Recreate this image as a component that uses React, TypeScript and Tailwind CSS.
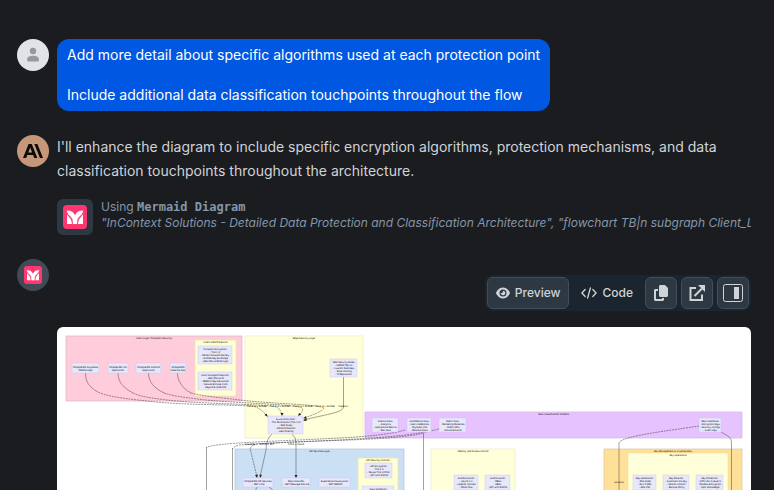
import type { ReactNode } from "react";
import { FaCopy, FaEye } from "react-icons/fa6";

type Box = { x: number; y: number; w: number; h: number };
type Group = Box & { title: string; fill: string; stroke: string };
type Node = Box & { lines: string[] };

const groups: Group[] = [
  { x: 9, y: 9, w: 176, h: 65, title: "Client Layer (Transport Security)", fill: "#ffccdc", stroke: "#d9b3be" },
  { x: 138, y: 13, w: 41, h: 56, title: "Client-Side Protection", fill: "#ffffd4", stroke: "#e6e6ab" },
  { x: 188, y: 9, w: 118, h: 102, title: "Edge Security Layer", fill: "#ffffd9", stroke: "#ebebc4" },
  { x: 308, y: 85, w: 377, h: 26, title: "Data Classification Schema", fill: "#e6c3ff", stroke: "#d2b6e2" },
  { x: 178, y: 122, w: 169, h: 170, title: "API Services Layer", fill: "#cce0f5", stroke: "#b1c2d4" },
  { x: 301, y: 131, w: 40, h: 150, title: "API Security Controls", fill: "#ffffd4", stroke: "#e6e6ab" },
  { x: 374, y: 122, w: 84, h: 170, title: "Identity and Access Control", fill: "#ffffd9", stroke: "#ebebc4" },
  { x: 547, y: 122, w: 138, h: 170, title: "Key Management & Cryptography", fill: "#ffe099", stroke: "#d9c69b" },
  { x: 571, y: 126, w: 100, h: 160, title: "Key Operations", fill: "#ffffd9", stroke: "#ebe2a4" },
];

const nodes: Node[] = [
  { x: 15, y: 36, w: 27, h: 10, lines: ["ShopperMX Anywhere", "(Mobile App)"] },
  { x: 51, y: 36, w: 20, h: 10, lines: ["ShopperMX iOS", "Application"] },
  { x: 79, y: 36, w: 25, h: 10, lines: ["ShopperMX Android", "Application"] },
  { x: 113, y: 36, w: 16, h: 10, lines: ["ShopperMX", "Desktop App"] },
  { x: 141, y: 19, w: 34, h: 18, lines: ["Transport Encryption", "- TLS 1.3", "- Perfect Forward Secrecy", "- ECDHE Key Exchange", "- AES-256-GCM Encrypt"] },
  { x: 141, y: 45, w: 34, h: 18, lines: ["Local Storage Protection", "- AES-256-GCM", "- PBKDF2 Key Derivation", "- Secure Enclave (iOS)", "- Keystore (Android)"] },
  { x: 273, y: 32, w: 27, h: 18, lines: ["WAF Security Rules", "- OWASP Top 10", "- Custom Rule Sets", "- Rate Limiting", "- IP Reputation"] },
  { x: 211, y: 89, w: 35, h: 18, lines: ["Azure Front Door", "- TLS Termination (TLS 1.3)", "- WAF Rules", "- DDoS Protection", "- Geo-Filtering"] },
  { x: 315, y: 91, w: 26, h: 14, lines: ["Internal Data", "- Analytics", "- Operational Metrics", "- Test Data"] },
  { x: 350, y: 91, w: 24, h: 14, lines: ["Confidential Data", "- User Credentials", "- Payment Info", "- Personal Data"] },
  { x: 382, y: 91, w: 27, h: 14, lines: ["Public Data", "- Marketing Materials", "- Public APIs", "- Documentation"] },
  { x: 642, y: 91, w: 22, h: 14, lines: ["Restricted Data", "- Encryption Keys", "- Security Configs", "- Audit Logs"] },
  { x: 186, y: 151, w: 30, h: 9, lines: ["ShopperMX API Services", "- .NET Core"] },
  { x: 225, y: 151, w: 28, h: 9, lines: ["Real-time APIs", "- .NET Message Service"] },
  { x: 262, y: 151, w: 31, h: 9, lines: ["Experience Visualization", "- .NET WebAPI"] },
  { x: 308, y: 136, w: 27, h: 15, lines: ["API Encryption", "- TLS 1.3", "- Mutual TLS (mTLS)", "- JWT with RS256"] },
  { x: 305, y: 159, w: 32, h: 6, lines: ["Data Validation"] },
  { x: 397, y: 148, w: 24, h: 15, lines: ["Authentication", "- OAuth 2.0", "- OpenID Connect", "- PKCE Flow"] },
  { x: 428, y: 148, w: 25, h: 15, lines: ["Authorization", "- RBAC", "- ABAC", "- JWT with RS256"] },
  { x: 576, y: 148, w: 23, h: 15, lines: ["Key Generation", "- RSA-4096", "- ECC P-384", "- AES-256"] },
  { x: 606, y: 148, w: 26, h: 15, lines: ["Key Rotation", "- Automatic 90-day", "- Version Control", "- Backup Policy"] },
  { x: 639, y: 148, w: 27, h: 15, lines: ["Key Protection", "- FIPS 140-2 Level 3", "- Shadow Encryption", "- Split Knowledge"] },
];

const dashedEdges = [
  "M39 64 C48 69 62 71 90 74 C130 79 190 77 199 80 Q205 83 210 89",
  "M76 66 C84 70 95 71 110 73 C140 77 210 77 220 80 Q224 83 225 88",
  "M107 66 C116 69 125 70 140 72 C170 76 240 77 245 81 Q247 84 242 88",
  "M134 66 C145 69 158 70 175 72 C210 77 262 77 267 81 Q265 85 247 91",
  "M348 103 C320 112 240 112 183 116 Q150 118 149.500 121",
  "M382 102 C340 113 260 113 183 118 Q177 119 175.500 122",
  "M366 106 C340 114 250 113 200 117 Q191 119 194 125 L200 150",
  "M642 99 C610 104 564 109 562 116",
];

const solidEdges = [
  "M28.500 46 C28.500 55 32 59 39 64",
  "M61 46 C61 56 67 61 76 66",
  "M91.500 46 C91.500 55 97 61 107 66",
  "M120.500 46 C120.500 54 125 61 134 66",
  "M286.500 50 V80 C286 86 265 88 247 93",
  "M215 107 Q209 112 209 123 L203 150",
  "M235 107 Q239 110 239 116 V150",
  "M149.500 120 V290",
  "M175.500 121 V290",
  "M366.500 106 V290",
  "M562 116 V290",
  "M664 105 C671 109 674.500 110 674.500 116 V290",
  "M200 160 Q197 164 198 180",
  "M212 160 Q219 163 220 180",
];

const arrowheads = [
  "M211 90 L207.500 88 L209.500 86.500 Z",
  "M225 89 L223.500 86 L226.500 86 Z",
  "M241 89 L242 86 L244.500 87.500 Z",
  "M246 91.500 L249 89 L249.500 91.500 Z",
  "M246 93.500 L249.500 91 L249.500 94 Z",
  "M200 151 L198 148 L201 147.500 Z",
  "M203 151 L202.500 147.500 L205 148 Z",
  "M239 151 L237.500 148 L240.500 148 Z",
];

const edgeLabels = [
  { x: 200, y: 80, text: "TLS 1.3 + ECDHE" },
  { x: 223, y: 80, text: "TLS 1.3 + ECDHE" },
  { x: 246, y: 80, text: "TLS 1.3 + ECDHE" },
  { x: 268, y: 80, text: "TLS 1.3 + ECDHE" },
  { x: 286, y: 80, text: "Inspects" },
  { x: 193, y: 118, text: "Classifies" },
  { x: 210, y: 118, text: "mTLS + JWT" },
  { x: 239, y: 118, text: "mTLS + OAuth" },
  { x: 562, y: 156, text: "Governs" },
];

function Diagram() {
  return (
    <svg
      viewBox="0 0 694 300"
      className="block w-full font-['DejaVu_Sans_Condensed','DejaVu_Sans',sans-serif]"
      role="img"
      aria-label="Data protection and classification architecture"
      fontSize="2.500"
      textAnchor="middle"
      fill="#000"
    >
      {groups.map((g) => (
        <g key={g.title}>
          <rect x={g.x} y={g.y} width={g.w} height={g.h} fill={g.fill} stroke={g.stroke} strokeWidth="0.700" />
          <text x={g.x + g.w / 2} y={g.y + 3}>
            {g.title}
          </text>
        </g>
      ))}
      {dashedEdges.map((d) => (
        <path key={d} d={d} fill="none" stroke="#333" strokeWidth="0.500" strokeDasharray="2 0.800" />
      ))}
      {solidEdges.map((d) => (
        <path key={d} d={d} fill="none" stroke="#444" strokeWidth="0.500" />
      ))}
      {arrowheads.map((d) => (
        <path key={d} d={d} fill="#222" />
      ))}
      {nodes.map((n) => (
        <g key={`${n.x}-${n.y}`}>
          <rect x={n.x} y={n.y} width={n.w} height={n.h} fill="#e8e8fc" stroke="#cdbcf0" strokeWidth="0.400" />
          {n.lines.map((line, i) => (
            <text key={line} x={n.x + n.w / 2} y={n.y + n.h / 2 + (i - (n.lines.length - 1) / 2) * 3 + 1}>
              {line}
            </text>
          ))}
        </g>
      ))}
      {edgeLabels.map((l) => (
        <text key={`${l.x}-${l.y}`} x={l.x} y={l.y}>
          {l.text}
        </text>
      ))}
    </svg>
  );
}

function MermaidLogo({ className }: { className: string }) {
  return (
    <svg viewBox="0 0 24 24" className={className} aria-hidden="true">
      <rect width="24" height="24" rx="4" fill="#ff3670" />
      <path d="M4 9 C5 12 9 13 9 19 H4 Z M20 9 C19 12 15 13 15 19 H20 Z" fill="#fff" />
      <path
        d="M3.500 5 C8 5 10.500 6.500 12 9.500 C13.500 6.500 16 5 20.500 5 C20.500 8.500 18.500 10.500 16.500 12 C15 13.200 14.600 15 14.600 19.500 H9.400 C9.400 15 9 13.200 7.500 12 C5.500 10.500 3.500 8.500 3.500 5 Z"
        fill="#fff"
        stroke="#ff3670"
        strokeWidth="0.900"
      />
    </svg>
  );
}

function Avatar({ className, children }: { className: string; children: ReactNode }) {
  return <div className={`flex size-8 shrink-0 items-center justify-center rounded-full ${className}`}>{children}</div>;
}

function IconButton({ label, children }: { label: string; children: ReactNode }) {
  return (
    <button
      type="button"
      aria-label={label}
      className="flex size-8 items-center justify-center rounded-md border border-[#414e5b] bg-[#2d3843]"
    >
      {children}
    </button>
  );
}

export default function App() {
  return (
    <main className="flex h-screen flex-col gap-6 overflow-hidden bg-[#1b1c1f] pt-[39px] pr-[23px] pl-[17px] font-[Inter,sans-serif] text-[#d0d3d8]">
      <section className="flex shrink-0 gap-2">
        <Avatar className="bg-[#e2e3e8]">
          <svg viewBox="0 0 16 16" className="size-4" fill="#96989e" aria-hidden="true">
            <circle cx="8" cy="4" r="3.200" />
            <path d="M2 13 C2 10 4.500 8.800 8 8.800 C11.500 8.800 14 10 14 13 Q14 14.500 12.500 14.500 H3.500 Q2 14.500 2 13 Z" />
          </svg>
        </Avatar>
        <div className="rounded-xl bg-[#0057e1] px-2.5 py-1.5 text-sm leading-5 whitespace-pre-wrap text-white">
          {"Add more detail about specific algorithms used at each protection point\n\nInclude additional data classification touchpoints throughout the flow"}
        </div>
      </section>

      <section className="flex shrink-0 gap-2">
        <Avatar className="bg-[#c7977a]">
          <svg viewBox="0 0 24 24" className="size-5" fill="#0b0b0b" aria-hidden="true">
            <path d="M17.3041 3.541h-3.6718l6.696 16.918H24Zm-10.6082 0L0 20.459h3.7442l1.3693-3.5527h7.0052l1.3693 3.5528h3.7442L10.5363 3.5409Zm-.3712 10.2232 2.2914-5.9456 2.2914 5.9456Z" />
          </svg>
        </Avatar>
        <div className="flex min-w-0 flex-1 flex-col gap-4">
          <p className="text-sm leading-6">
            I'll enhance the diagram to include specific encryption algorithms, protection mechanisms, and data
            classification touchpoints throughout the architecture.
          </p>
          <div className="flex gap-2 text-xs leading-4 text-[#8496aa]">
            <div className="flex size-9 shrink-0 items-center justify-center rounded-md bg-[#2d3843]">
              <MermaidLogo className="size-6" />
            </div>
            <div className="min-w-0 flex-1">
              <p>
                Using <b className="font-['DejaVu_Sans_Mono',monospace]">Mermaid Diagram</b>
              </p>
              <p className="overflow-hidden whitespace-nowrap italic">
                "InContext Solutions - Detailed Data Protection and Classification Architecture", "flowchart TB|n
                subgraph Client_La
              </p>
            </div>
          </div>
        </div>
      </section>

      <section className="flex shrink-0 gap-2">
        <Avatar className="bg-[#414b57]">
          <MermaidLogo className="size-[18px]" />
        </Avatar>
        <div className="flex min-w-0 flex-1 flex-col gap-4 pt-4">
          <div className="flex gap-1 self-end rounded-lg bg-[#1b252f] p-0.5 text-xs font-medium">
            <button
              type="button"
              className="flex h-8 items-center gap-[5px] rounded-md border border-[#414e5b] bg-[#2d3843] px-2"
            >
              <FaEye className="size-3.5" />
              Preview
            </button>
            <button type="button" className="flex h-8 items-center gap-[5px] px-2">
              <svg viewBox="0 0 16 12" className="h-3 w-4" fill="none" stroke="currentColor" strokeWidth="1.300" strokeLinecap="round" strokeLinejoin="round" aria-hidden="true">
                <path d="M4.200 2.500 L0.900 6 L4.200 9.500 M11.800 2.500 L15.100 6 L11.800 9.500 M9.400 1 L6.600 11" />
              </svg>
              Code
            </button>
            <IconButton label="Copy">
              <FaCopy className="size-4" />
            </IconButton>
            <IconButton label="Open in new window">
              <svg viewBox="0 0 16 16" className="size-4" fill="none" stroke="currentColor" strokeWidth="2" aria-hidden="true">
                <path d="M7 3 H1.500 V15 H13 V9.500 M5.500 11 L13 3.500" />
                <path d="M9 0 H16 V7 Z" fill="currentColor" stroke="none" />
              </svg>
            </IconButton>
            <IconButton label="Toggle side panel">
              <svg viewBox="0 0 20 18" className="h-[18px] w-5 shrink-0" fill="none" aria-hidden="true">
                <rect x="0.500" y="0.500" width="19" height="17" rx="2" stroke="currentColor" />
                <rect x="11" y="3" width="5" height="12" fill="currentColor" />
              </svg>
            </IconButton>
          </div>
          <div className="overflow-hidden rounded-md bg-white">
            <Diagram />
          </div>
        </div>
      </section>
    </main>
  );
}
